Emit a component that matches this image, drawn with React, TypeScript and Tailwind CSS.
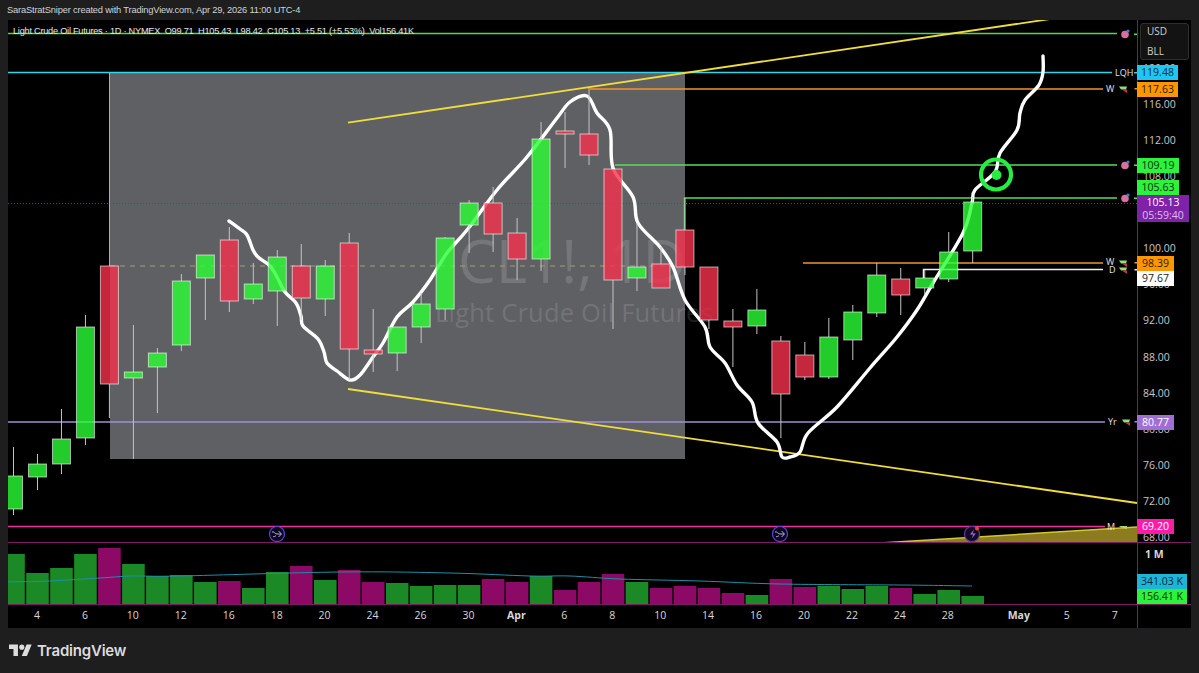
import React from "react";

type C = [number, number, number, number, "g" | "r"];
const candles: C[] = [
  [447, 476, 509, 515, "g"], [454, 464, 477, 490, "g"], [409, 439, 464, 474, "g"], [315, 327, 438, 445, "g"],
  [266, 266, 384, 418, "r"], [325, 372, 378, 459, "g"], [348, 353, 367, 413, "g"], [274, 281, 345, 351, "g"],
  [255, 255, 278, 320, "g"], [227, 240, 301, 312, "r"], [263, 284, 299, 304, "g"], [250, 257, 291, 326, "g"],
  [244, 266, 298, 320, "r"], [260, 266, 299, 316, "g"], [233, 243, 349, 380, "r"], [309, 350, 354, 372, "r"],
  [327, 327, 353, 371, "g"], [293, 304, 327, 343, "g"], [237, 238, 309, 320, "g"], [200, 203, 225, 253, "g"],
  [187, 203, 234, 252, "r"], [218, 233, 259, 280, "r"], [122, 139, 259, 271, "g"], [112, 131, 134, 168, "r"],
  [90, 134, 155, 165, "r"], [169, 169, 280, 329, "r"], [223, 267, 278, 291, "g"], [247, 264, 288, 288, "r"],
  [198, 230, 267, 275, "r"], [267, 267, 320, 329, "r"], [309, 321, 327, 367, "r"], [289, 310, 326, 334, "g"],
  [336, 341, 394, 438, "r"], [342, 355, 377, 380, "r"], [318, 337, 377, 379, "g"], [305, 312, 340, 360, "g"],
  [263, 275, 313, 317, "g"], [268, 279, 295, 315, "r"], [270, 278, 288, 295, "g"], [232, 252, 279, 282, "g"],
  [197, 202, 251, 263, "g"],
];
const cx = (i: number) => 13.5 + 23.98 * i;

const vols: [number, "g" | "m"][] = [
  [555, "g"], [574, "g"], [569, "g"], [555, "g"], [549, "m"], [565, "g"], [577, "g"], [576, "g"], [583, "g"], [582, "m"],
  [589, "g"], [573, "g"], [567, "m"], [581, "g"], [571, "m"], [583, "m"], [584, "g"], [587, "g"], [586, "g"], [586, "g"],
  [580, "m"], [583, "m"], [577, "g"], [591, "m"], [583, "m"], [575, "m"], [583, "g"], [589, "m"], [587, "m"], [589, "m"],
  [594, "m"], [596, "g"], [580, "m"], [588, "m"], [587, "g"], [590, "g"], [587, "g"], [589, "m"], [595, "g"], [591, "g"], [597, "g"],
];

const curve: [number, number][] = [
  [229, 221], [240, 229], [247, 235], [253, 250], [258, 257], [270, 266], [277, 277], [285, 292], [296, 303], [301, 316], [303, 326],
  [318, 339], [324, 352], [327, 363], [337, 371], [350, 380], [360, 375], [373, 357], [383, 343], [397, 317], [413, 302], [430, 280],
  [447, 253], [467, 230], [497, 190], [527, 157], [557, 118], [570, 102], [587, 96], [597, 113], [610, 130], [613, 168], [633, 197],
  [638, 223], [660, 247], [673, 267], [685, 300], [705, 327], [710, 347], [725, 363], [737, 385], [752, 402], [758, 423], [777, 442],
  [782, 457], [790, 457], [800, 452], [808, 433], [837, 407], [870, 368], [897, 337], [917, 310], [933, 283], [963, 233], [972, 203],
  [975, 190], [995, 172], [1000, 153], [1017, 130], [1020, 113], [1025, 100], [1039, 85], [1043, 72], [1043, 56],
];

function smooth(p: [number, number][]) {
  let d = `M${p[0][0]} ${p[0][1]}`;
  for (let i = 0; i < p.length - 1; i++) {
    const a = p[Math.max(i - 1, 0)], b = p[i], c = p[i + 1], e = p[Math.min(i + 2, p.length - 1)];
    d += `C${(b[0] + (c[0] - a[0]) / 6).toFixed(1)} ${(b[1] + (c[1] - a[1]) / 6).toFixed(1)} ${(c[0] - (e[0] - b[0]) / 6).toFixed(1)} ${(c[1] - (e[1] - b[1]) / 6).toFixed(1)} ${c[0]} ${c[1]}`;
  }
  return d;
}

const maLine: [number, number][] = [[8, 583], [50, 582], [100, 579], [133, 577], [180, 577], [340, 573], [450, 574], [530, 577], [570, 577], [620, 580], [700, 582], [780, 585], [900, 586], [972, 587]];

const ticks = ["120.00", "116.00", "112.00", "108.00", "100.00", "96.00", "92.00", "88.00", "84.00", "80.00", "76.00", "72.00", "68.00"];
const tickY = [68, 104, 140, 176, 248, 284, 320, 357, 393, 429, 465, 501, 537];

const labels = [
  { t: "119.48", y: 65, h: 15, w: 41, c: "bg-[#1cc8f2] text-[#0c2a38]" },
  { t: "117.63", y: 82, h: 15, w: 41, c: "bg-[#ff9500] text-[#2b1a00]" },
  { t: "109.19", y: 158, h: 15, w: 42, c: "bg-[#2cf23c] text-[#08300c]" },
  { t: "105.63", y: 180, h: 15, w: 42, c: "bg-[#2cf23c] text-[#08300c]" },
  { t: "98.39", y: 256, h: 15, w: 37, c: "bg-[#ff9500] text-[#2b1a00]" },
  { t: "97.67", y: 271, h: 15, w: 37, c: "bg-white text-[#1a1a1a]" },
  { t: "80.77", y: 415, h: 15, w: 37, c: "bg-[#a06fd6] text-white" },
  { t: "69.20", y: 519, h: 15, w: 37, c: "bg-[#ff1aa8] text-white" },
];

const times: [string, boolean][] = [
  ["4", false], ["6", false], ["10", false], ["12", false], ["16", false], ["18", false], ["20", false], ["24", false], ["26", false], ["30", false],
  ["Apr", true], ["6", false], ["8", false], ["10", false], ["14", false], ["16", false], ["20", false], ["22", false], ["24", false], ["28", false],
];

function Pin({ y }: { y: number }) {
  return (
    <g>
      <circle cx={1125} cy={y + 0.5} r={3.8} fill="#d8709c" />
      <circle cx={1128} cy={y - 3} r={1.6} fill="#3f7fd0" />
      <rect x={1134} y={y - 0.5} width={3} height={1.5} fill="#4fe05a" />
    </g>
  );
}
function Flag({ x, y, c }: { x: number; y: number; c: string }) {
  return (
    <g>
      <polygon points={`${x - 4},${y - 2.5} ${x + 4},${y - 2.5} ${x + 3},${y + 0.5} ${x - 2},${y + 0.5}`} fill="#8ee07a" />
      <polygon points={`${x - 1},${y + 0.5} ${x + 4},${y + 0.5} ${x + 4},${y + 4}`} fill="#c8354c" />
      <rect x={1134.5} y={y - 1} width={2.5} height={1.5} fill={c} />
    </g>
  );
}
function Ev({ x }: { x: number }) {
  return (
    <g fill="none">
      <circle cx={x} cy={534} r={7.5} fill="#0c0820" stroke="#5a45d6" strokeWidth={1.2} />
      <path d={`M${x - 5} ${532}c2 -1 3 2 5 2h4M${x + 1.5} ${531}l3 3l-3 3M${x - 4} ${536.5}c1 .5 2 0 3 -1`} stroke="#c9c4ee" strokeWidth={0.9} />
    </g>
  );
}
function T({ x, y, t }: { x: number; y: number; t: string }) {
  return <text x={x} y={y} fontSize={9} fill="#e4e4e4" fontFamily="Open Sans, sans-serif">{t}</text>;
}

export default function App() {
  return (
    <div className="w-[1199px] h-[673px] bg-[#1e1e1e] flex flex-col overflow-hidden font-['Open_Sans',sans-serif]">
      <div className="h-[20px] pl-[7px] font-['Liberation_Sans',sans-serif] text-[9.3px] tracking-[-0.17px] leading-[21px] text-[#d0d3d8] whitespace-nowrap">
        SaraStratSniper created with TradingView.com, Apr 29, 2026 11:00 UTC-4
      </div>
      <div className="ml-[8px] w-[1183px] h-[608px] bg-black flex">
        <div className="w-[1129px] shrink-0 flex flex-col">
          <div className="relative h-[523px] border-b border-[#7d1c66] overflow-hidden">
            <svg className="block" width={1129} height={523} viewBox="8 20 1129 523">
              <rect x={110} y={73} width={575} height={386} fill="#5f6063" />
              <text x={572} y={283} textAnchor="middle" fontSize={60} fill="#fff" fillOpacity={0.14} fontFamily="Open Sans, sans-serif">CL1!, 1D</text>
              <text x={574} y={322} textAnchor="middle" fontSize={25.5} letterSpacing={0.2} fill="#fff" fillOpacity={0.14} fontFamily="Open Sans, sans-serif">Light Crude Oil Futures</text>
              <line x1={110} y1={266} x2={685} y2={266} stroke="#a3a070" strokeWidth={1} strokeDasharray="5 5" />
              <line x1={8} y1={203.5} x2={1137} y2={203.5} stroke="#7a2a96" strokeWidth={1} strokeDasharray="1 2" />
              <line x1={109.5} y1={73} x2={109.5} y2={266} stroke="#b0b0b0" />
              <line x1={8} y1={33.5} x2={1117} y2={33.5} stroke="#4fd65a" strokeWidth={1.7} />
              <line x1={8} y1={72.5} x2={1112} y2={72.5} stroke="#35d2ea" strokeWidth={1.7} />
              <line x1={588} y1={89} x2={1103} y2={89} stroke="#f0952a" strokeWidth={1.7} />
              <line x1={615} y1={165} x2={1117} y2={165} stroke="#4fe05a" strokeWidth={1.7} />
              <polyline points="684.5,230 684.5,198 1117,198" fill="none" stroke="#4fe05a" strokeWidth={1.5} />
              <line x1={803} y1={263} x2={1103} y2={263} stroke="#f0952a" strokeWidth={1.7} />
              <polyline points="923.5,278 923.5,269.5 1103,269.5" fill="none" stroke="#f0f0f0" strokeWidth={1.5} />
              <line x1={8} y1={422} x2={1105} y2={422} stroke="#a08fd0" strokeWidth={1.7} />
              <line x1={8} y1={526.5} x2={1105} y2={526.5} stroke="#ee2fa4" strokeWidth={1.7} />
              <line x1={348} y1={122.7} x2={1057} y2={18} stroke="#f0dc3c" strokeWidth={1.8} />
              <line x1={348} y1={389} x2={1137} y2={503} stroke="#f0dc3c" strokeWidth={1.8} />
              <polygon points="880,543 1137,527 1137,543" fill="#8c7c1e" />
              <line x1={880} y1={543} x2={1137} y2={527} stroke="#d4c436" strokeWidth={1.5} />
              <path d={smooth(curve)} fill="none" stroke="#fff" strokeWidth={3.4} strokeLinejoin="round" strokeLinecap="round" />
              {candles.map((c, i) => {
                const x = cx(i);
                return (
                  <g key={i}>
                    <line x1={x} y1={c[0]} x2={x} y2={c[1]} stroke="#c4c4c4" />
                    <line x1={x} y1={c[2]} x2={x} y2={c[3]} stroke="#c4c4c4" />
                    <rect x={x - 9} y={c[1]} width={18} height={c[2] - c[1]} fill={c[4] === "g" ? "#2aff34" : "#f6324c"} fillOpacity={0.8} stroke="#fff" strokeOpacity={0.6} strokeWidth={1} />
                  </g>
                );
              })}
              <circle cx={996} cy={174.5} r={15} fill="none" stroke="#25ee40" strokeWidth={4.2} />
              <circle cx={996.5} cy={175} r={5} fill="#25ee40" />
              <Ev x={277} />
              <Ev x={780} />
              <g fill="none">
                <circle cx={972} cy={534} r={7.5} fill="#140a24" stroke="#5b3a92" strokeWidth={1.2} />
                <path d="M974 529.5l-4 5h3.2l-1.4 4l4-5h-3.2z" fill="#a06fe0" />
                <circle cx={977} cy={528.5} r={2} fill="#f04040" />
              </g>
              <Pin y={34} />
              <Pin y={165} />
              <Pin y={198} />
              <T x={1115} y={76} t="LQH" />
              <rect x={1134} y={72} width={3} height={1.5} fill="#35d2ea" />
              <T x={1106} y={92} t="W" />
              <Flag x={1123} y={89} c="#f0952a" />
              <T x={1106} y={265} t="W" />
              <Flag x={1123} y={263} c="#f0952a" />
              <T x={1109} y={273} t="D" />
              <Flag x={1123} y={270} c="#f0f0f0" />
              <T x={1108} y={425} t="Yr" />
              <Flag x={1126} y={422} c="#a08fd0" />
              <T x={1107} y={530} t="M" />
              <polygon points="1119,526 1127,526 1127,529 1122,528" fill="#a8d86a" />
            </svg>
            <div className="absolute left-[5px] top-[4px] font-['Liberation_Sans',sans-serif] text-[9.2px] tracking-[-0.24px] leading-[14px] text-[#e6e6e6] whitespace-pre">
              {"Light Crude Oil Futures · 1D · NYMEX  O99.71  H105.43  L98.42  C105.13  +5.51 (+5.53%)  Vol156.41K"}
            </div>
          </div>
          <div className="h-[62px] border-b border-[#7d1c66]">
            <svg className="block" width={1129} height={61} viewBox="8 544 1129 61">
              {vols.map((v, i) => {
                const x = Math.max(cx(i) - 11.3, 8);
                const r = cx(i) + 11.3;
                return <rect key={i} x={x} y={v[0]} width={r - x} height={605 - v[0]} fill={v[1] === "g" ? "#1b8a26" : "#8c0a66"} />;
              })}
              <path d={smooth(maLine)} fill="none" stroke="#1f8fa8" strokeWidth={1} />
            </svg>
          </div>
          <div className="h-[22px] flex items-center pl-[5px] text-[10.5px] text-[#d8d8d8]">
            {times.map(([t, b], i) => (
              <div key={i} className={b ? "w-[47.95px] shrink-0 text-center font-bold" : "w-[47.95px] shrink-0 text-center"}>{t}</div>
            ))}
            <div className="w-[48px] shrink-0 ml-[23px] text-center font-bold">May</div>
            <div className="w-[48px] shrink-0 text-center">5</div>
            <div className="w-[48px] shrink-0 text-center">7</div>
          </div>
        </div>
        <div className="w-[54px] border-l border-[#7d1c66] flex flex-col text-[10.5px]">
          <div className="relative h-[523px] border-b border-[#7d1c66] -ml-px">
            {ticks.map((t, i) => (
              <div key={t} className="absolute left-[6px] h-[14px] leading-[14px] text-[#c8c8c8]" style={{ top: tickY[i] - 27 }}>{t}</div>
            ))}
            <div className="absolute left-[3px] top-[3px] w-[49px] h-[37px] rounded-[3px] border border-[#2e2e2e] bg-[#131313] text-[10px] leading-[15px] text-[#cfcfcf] pl-[6px] flex flex-col gap-[5px]">
              <div>USD</div>
              <div>BLL</div>
            </div>
            {labels.map((l) => (
              <div key={l.t} className={`absolute left-0 text-center leading-[15px] ${l.c}`} style={{ top: l.y - 20, height: l.h, width: l.w }}>{l.t}</div>
            ))}
            <div className="absolute left-0 top-[175px] w-[52px] h-[27px] bg-[#7e22a8] text-center leading-[13px] pt-px">
              <div className="text-white">105.13</div>
              <div className="text-[#e0bdf0]">05:59:40</div>
            </div>
          </div>
          <div className="h-[62px] border-b border-[#7d1c66] -ml-px flex flex-col">
            <div className="pl-[8px] pt-[4px] h-[31px] text-[#d8d8d8] font-bold">1 M</div>
            <div className="w-[50px] h-[15px] leading-[15px] text-center bg-[#1cb5d8] text-[#0c2a38]">341.03 K</div>
            <div className="w-[50px] h-[15px] leading-[15px] text-center bg-[#2cf23c] text-[#08300c]">156.41 K</div>
          </div>
          <div className="h-[22px]" />
        </div>
      </div>
      <div className="flex-1 flex items-center pl-[9px] gap-[5px] pt-[1px] text-[#dcdcdc]">
        <svg width={23} height={18} viewBox="0 0 36 28" fill="#dcdcdc">
          <path d="M14 22H7V11H0V4h14v18zM28 22h-8l7.5-18h8L28 22z" />
          <circle cx={20} cy={8} r={4} />
        </svg>
        <span className="font-['Inter',sans-serif] font-semibold text-[15px] tracking-[-0.2px]">TradingView</span>
      </div>
    </div>
  );
}
